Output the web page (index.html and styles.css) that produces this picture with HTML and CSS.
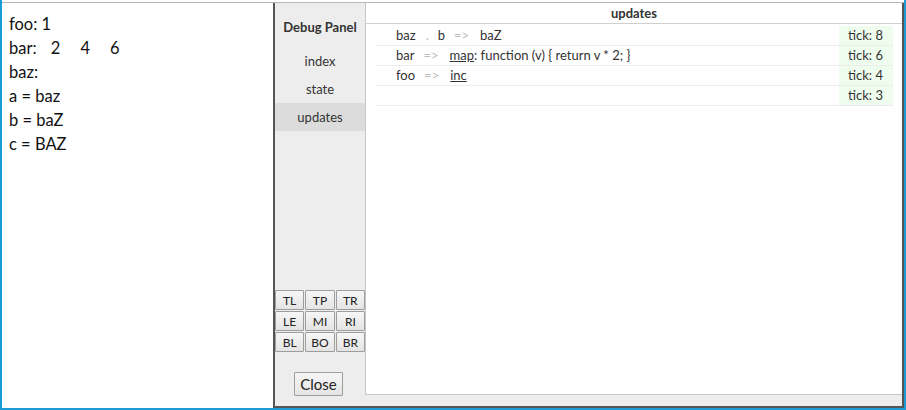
FILE: index.html
```html
<!DOCTYPE html>
<html>
<head>
<meta charset="utf-8">
<link rel="stylesheet" href="styles.css">
</head>
<body>
<div class="frame">
  <div class="topline"></div>
  <main class="app">
    <div class="line">foo: 1</div>
    <div class="line">bar: <span class="num">2</span><span class="num">4</span><span class="num">6</span></div>
    <div class="line">baz:</div>
    <div class="line">a = baz</div>
    <div class="line">b = baZ</div>
    <div class="line">c = BAZ</div>
  </main>
  <aside class="debug">
    <div class="sidebar">
      <div class="title">Debug Panel</div>
      <div class="nav">
        <div class="nav-item">index</div>
        <div class="nav-item">state</div>
        <div class="nav-item active">updates</div>
      </div>
      <div class="spacer"></div>
      <div class="pos-grid">
        <button class="pos">TL</button>
        <button class="pos">TP</button>
        <button class="pos">TR</button>
        <button class="pos">LE</button>
        <button class="pos">MI</button>
        <button class="pos">RI</button>
        <button class="pos">BL</button>
        <button class="pos">BO</button>
        <button class="pos">BR</button>
      </div>
      <button class="close">Close</button>
    </div>
    <div class="main-col">
      <div class="content">
        <div class="header">updates</div>
        <div class="list">
          <div class="row">
            <span class="seg">baz</span><span class="dot">.</span><span class="seg">b</span><span class="arrow">=&gt;</span><span class="seg">baZ</span>
            <span class="tick">tick: 8</span>
          </div>
          <div class="row">
            <span class="seg">bar</span><span class="arrow">=&gt;</span><span class="seg"><span class="fn">map</span>: function (v) { return v * 2; }</span>
            <span class="tick">tick: 6</span>
          </div>
          <div class="row">
            <span class="seg">foo</span><span class="arrow">=&gt;</span><span class="seg"><span class="fn">inc</span></span>
            <span class="tick">tick: 4</span>
          </div>
          <div class="row">
            <span class="tick">tick: 3</span>
          </div>
        </div>
      </div>
    </div>
  </aside>
</div>
</body>
</html>
```
FILE: styles.css
```css
html, body {
  margin: 0;
  padding: 0;
  background: #fff;
}
body {
  font-family: "Source Sans Pro", Lato, "Liberation Sans", sans-serif;
  color: #111;
}
.frame {
  position: relative;
  width: 906px;
  height: 410px;
  box-sizing: border-box;
  border: 2px solid #1b9bd5;
  border-top: none;
  overflow: hidden;
}
.topline {
  margin-top: 2px;
  border-top: 1px solid #b8b8b8;
}
.app {
  padding: 9px 0 0 7px;
  font-size: 16.5px;
  line-height: 24px;
}
.num {
  padding: 0 10px;
}
.debug {
  position: absolute;
  top: 3px;
  left: 271px;
  right: 0;
  bottom: 0;
  box-sizing: border-box;
  display: flex;
  background: #ededed;
  border: 2px solid #555;
  border-top: none;
  font-size: 13px;
  color: #333;
}
.sidebar {
  width: 90px;
  display: flex;
  flex-direction: column;
}
.title {
  padding: 15px 0 11px;
  line-height: 18px;
  text-align: center;
  font-weight: bold;
}
.nav-item {
  height: 28px;
  line-height: 28px;
  text-align: center;
}
.nav-item.active {
  background: #dcdcdc;
}
.spacer {
  flex: 1;
}
.pos-grid {
  display: grid;
  grid-template-columns: repeat(3, 1fr);
  grid-auto-rows: 20px;
  gap: 1px;
}
.pos, .close {
  font-family: inherit;
  color: #222;
  border: 1px solid #9d9d9d;
  border-radius: 1px;
  background: linear-gradient(#f6f6f6, #e4e4e4);
  padding: 0;
  margin: 0;
}
.pos {
  font-size: 12px;
  width: 100%;
  height: 20px;
}
.close {
  font-size: 15px;
  width: 49px;
  height: 24px;
  margin: 20px 0 10px 19px;
}
.main-col {
  flex: 1;
  display: flex;
  flex-direction: column;
  padding-bottom: 11px;
}
.content {
  flex: 1;
  background: #fff;
  border-left: 1px solid #c8c8c8;
  border-bottom: 1px solid #c8c8c8;
}
.header {
  height: 20px;
  line-height: 20px;
  text-align: center;
  font-weight: bold;
  border-bottom: 1px solid #cfcfcf;
}
.list {
  margin: 2px 9px 0 10px;
}
.row {
  display: flex;
  height: 19px;
  line-height: 19px;
  border-bottom: 1px solid #ececec;
  padding-left: 20px;
}
.dot {
  color: #bbb;
  margin: 0 9px 0 10px;
}
.arrow {
  color: #bbb;
  margin: 0 11px 0 9px;
}
.fn {
  text-decoration: underline;
}
.tick {
  margin-left: auto;
  background: #effdef;
  padding: 0 10px 0 9px;
}
```
